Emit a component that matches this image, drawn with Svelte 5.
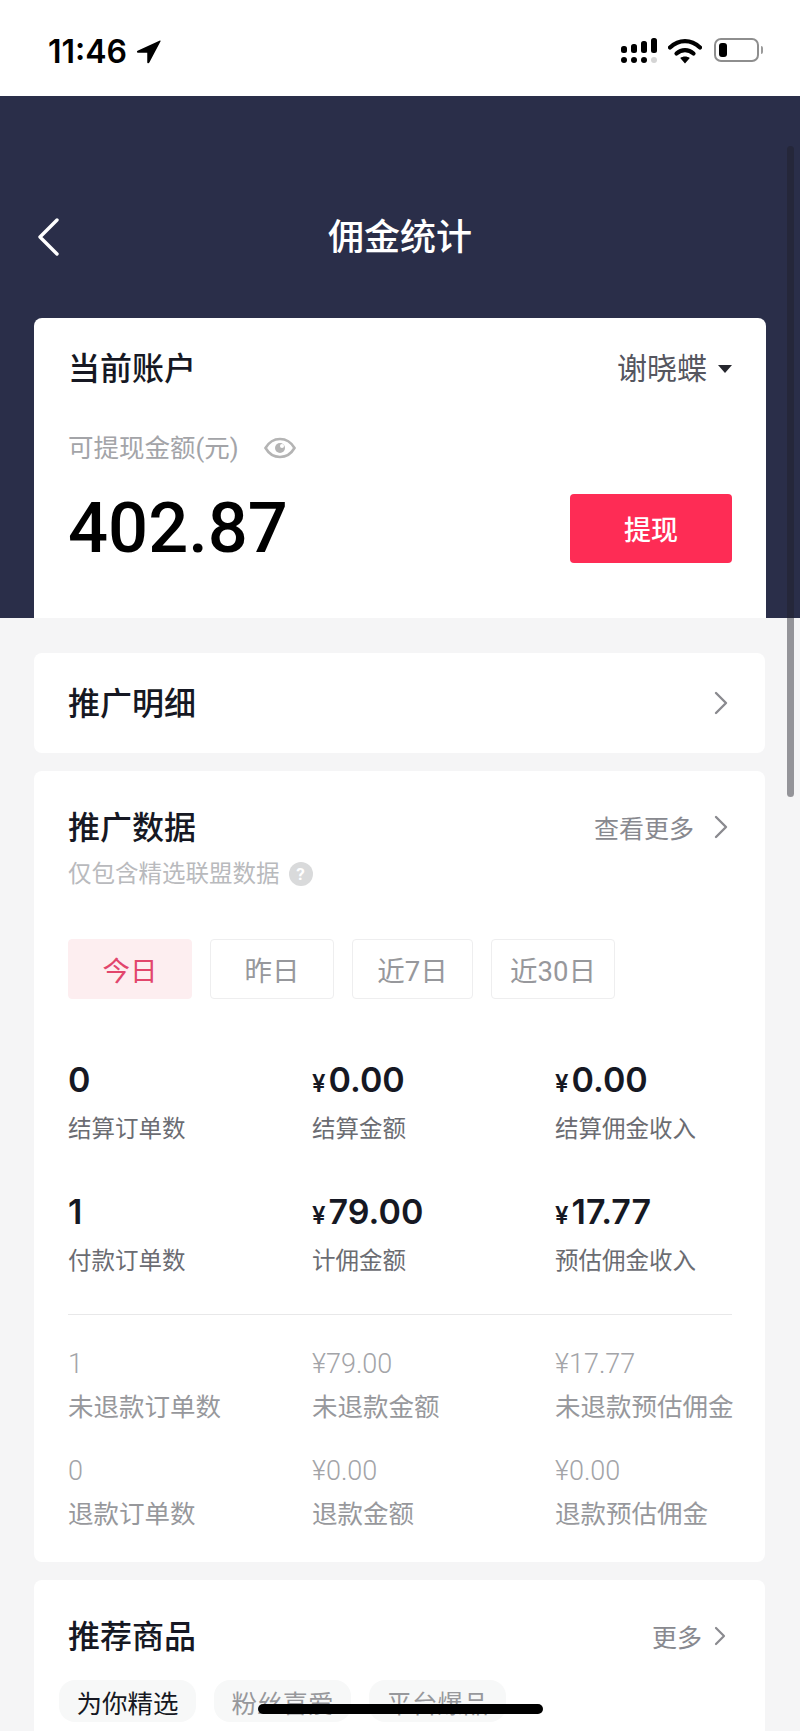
<script>
	const tabs = ['今日', '昨日', '近7日', '近30日'];

	const mainStats = [
		{ value: '0', label: '结算订单数' },
		{ value: '0.00', cur: true, label: '结算金额' },
		{ value: '0.00', cur: true, label: '结算佣金收入' },
		{ value: '1', label: '付款订单数' },
		{ value: '79.00', cur: true, label: '计佣金额' },
		{ value: '17.77', cur: true, label: '预估佣金收入' }
	];

	const subStats = [
		{ value: '1', label: '未退款订单数' },
		{ value: '¥79.00', label: '未退款金额' },
		{ value: '¥17.77', label: '未退款预估佣金' },
		{ value: '0', label: '退款订单数' },
		{ value: '¥0.00', label: '退款金额' },
		{ value: '¥0.00', label: '退款预估佣金' }
	];

	const chips = ['为你精选', '粉丝喜爱', '平台爆品'];
</script>

<div class="page">
	<header class="status">
		<div class="time">
			<span>11:46</span>
			<svg class="arrow" viewBox="0 0 24 24" width="25" height="25">
				<path d="M23 1.500 1.500 11.200c-1 .5-.7 2 .4 2H10.800v9c0 1.200 1.500 1.400 2 .4L23.600 2.200c.2-.5-.2-.9-.6-.7z" fill="#000" />
			</svg>
		</div>
		<div class="indicators">
			<svg viewBox="0 0 36 26" width="36" height="26">
				<g fill="#000">
					<rect x="0" y="8" width="6" height="7" rx="2.500" />
					<rect x="10" y="6" width="6" height="9" rx="2.500" />
					<rect x="20" y="3" width="6" height="12" rx="2.500" />
					<rect x="30" y="0" width="6" height="15" rx="2.500" />
					<circle cx="3" cy="22" r="3" />
					<circle cx="13" cy="22" r="3" />
					<circle cx="23" cy="22" r="3" />
				</g>
				<circle cx="33" cy="22" r="3" fill="#d4d4d4" />
			</svg>
			<svg viewBox="0 0 34 26" width="34" height="26">
				<path d="M2 9.500C11 1 23 1 32 9.500" fill="none" stroke="#000" stroke-width="4.200" stroke-linecap="round" />
				<path d="M8.500 15.500c5-4.600 12-4.600 17 0" fill="none" stroke="#000" stroke-width="4.200" stroke-linecap="round" />
				<path d="M12.200 20 17 25.500 21.800 20c-2.800-2-6.800-2-9.600 0z" fill="#000" />
			</svg>
			<div class="battery"><i></i></div>
		</div>
	</header>

	<section class="hero">
		<div class="nav">
			<svg class="back" viewBox="0 0 22 38" width="22" height="38">
				<path d="M20 2 3 19l17 17" fill="none" stroke="#fff" stroke-width="3.400" stroke-linecap="round" stroke-linejoin="round" />
			</svg>
			<h1>佣金统计</h1>
		</div>
		<div class="account">
			<div class="row">
				<h2>当前账户</h2>
				<div class="user">谢晓蝶<span class="caret"></span></div>
			</div>
			<div class="balance-label">
				可提现金额(元)
				<svg viewBox="0 0 32 22" width="32" height="22">
					<path d="M1.500 11C5 5 10 2 16 2s11 3 14.500 9C27 17 22 20 16 20S5 17 1.500 11z" fill="none" stroke="#b4b4b4" stroke-width="2.600" />
					<circle cx="16" cy="11" r="5" fill="#b4b4b4" />
					<circle cx="18" cy="9" r="2" fill="#fff" />
				</svg>
			</div>
			<div class="row amount-row">
				<div class="amount">402.87</div>
				<button class="withdraw">提现</button>
			</div>
		</div>
	</section>

	<main class="content">
		<section class="card detail">
			<h2>推广明细</h2>
			<svg class="chev" viewBox="0 0 14 24" width="14" height="24">
				<path d="M2 2l10 10L2 22" fill="none" stroke="#8a8a8f" stroke-width="2.400" stroke-linecap="round" stroke-linejoin="round" />
			</svg>
		</section>

		<section class="card data">
			<div class="row">
				<h2>推广数据</h2>
				<div class="more">
					查看更多
					<svg class="chev" viewBox="0 0 14 24" width="14" height="24">
						<path d="M2 2l10 10L2 22" fill="none" stroke="#8a8a8f" stroke-width="2.400" stroke-linecap="round" stroke-linejoin="round" />
					</svg>
				</div>
			</div>
			<div class="hint">仅包含精选联盟数据<span class="help">?</span></div>

			<div class="tabs">
				{#each tabs as tab, i}
					<div class="tab" class:active={i === 0}>{tab}</div>
				{/each}
			</div>

			<div class="grid main-grid">
				{#each mainStats as s}
					<div class="stat">
						<div class="value">
							{#if s.cur}<span class="cur">¥</span>{/if}{s.value}
						</div>
						<div class="label">{s.label}</div>
					</div>
				{/each}
			</div>

			<div class="divider"></div>

			<div class="grid sub-grid">
				{#each subStats as s}
					<div class="sub">
						<div class="sub-value">{s.value}</div>
						<div class="sub-label">{s.label}</div>
					</div>
				{/each}
			</div>
		</section>

		<section class="card rec">
			<div class="row">
				<h2>推荐商品</h2>
				<div class="more small">
					更多
					<svg class="chev" viewBox="0 0 12 20" width="12" height="20">
						<path d="M2 2l8 8-8 8" fill="none" stroke="#8a8a8f" stroke-width="2.200" stroke-linecap="round" stroke-linejoin="round" />
					</svg>
				</div>
			</div>
			<div class="chips">
				{#each chips as chip, i}
					<div class="chip" class:on={i === 0}>{chip}</div>
				{/each}
			</div>
		</section>
	</main>

	<div class="scrollbar"></div>
	<div class="home"></div>
</div>

<style>
	:global(body) {
		margin: 0;
		background: #f5f5f6;
	}

	.page {
		position: relative;
		width: 800px;
		height: 1731px;
		overflow: hidden;
		background: #f5f5f6;
		color: #161823;
		font-family: Roboto, "Noto Sans CJK SC", sans-serif;
	}

	.status {
		height: 96px;
		background: #fff;
		display: flex;
		justify-content: space-between;
		align-items: flex-start;
		padding: 38px 41px 0 48px;
		box-sizing: border-box;
	}

	.time {
		display: flex;
		align-items: center;
		gap: 9px;
		height: 26px;
		font-family: Inter, sans-serif;
		font-size: 32px;
		font-weight: 600;
		color: #000;
	}

	.indicators {
		display: flex;
		align-items: flex-start;
		gap: 11px;
	}

	.battery {
		position: relative;
		width: 45px;
		height: 24px;
		margin-left: 1px;
		box-sizing: border-box;
		border: 2px solid #8e8e8e;
		border-radius: 7px;
		padding: 3px;
	}

	.battery i {
		display: block;
		width: 8px;
		height: 14px;
		background: #000;
		border-radius: 3px;
	}

	.battery::after {
		content: '';
		position: absolute;
		right: -6px;
		top: 6px;
		width: 2px;
		height: 8px;
		background: #9a9a9a;
		border-radius: 0 2px 2px 0;
	}

	.hero {
		height: 522px;
		box-sizing: border-box;
		background: #2a2e49;
		padding: 0 34px;
		display: flex;
		flex-direction: column;
	}

	.nav {
		position: relative;
		height: 222px;
		padding-top: 118px;
		box-sizing: border-box;
		text-align: center;
	}

	.back {
		position: absolute;
		left: 3px;
		top: 122px;
	}

	h1 {
		margin: 0;
		font-size: 36px;
		line-height: 48px;
		font-weight: 500;
		color: #fff;
	}

	.account {
		flex: 1;
		background: #fff;
		border-radius: 8px 8px 0 0;
		padding: 30px 34px 0 34px;
	}

	.row {
		display: flex;
		justify-content: space-between;
		align-items: center;
	}

	h2 {
		margin: 0;
		font-size: 32px;
		line-height: 42px;
		font-weight: 500;
		color: #161823;
	}

	.user {
		display: flex;
		align-items: center;
		font-size: 30px;
		line-height: 42px;
		color: #55565f;
	}

	.caret {
		width: 0;
		height: 0;
		margin-left: 11px;
		border-left: 7px solid transparent;
		border-right: 7px solid transparent;
		border-top: 8px solid #26272e;
	}

	.balance-label {
		display: flex;
		align-items: center;
		gap: 25px;
		margin-top: 41px;
		font-size: 25.500px;
		line-height: 34px;
		color: #a3a4a8;
	}

	.amount-row {
		margin-top: 23px;
	}

	.amount {
		font-size: 70.500px;
		line-height: 80px;
		font-weight: 500;
		color: #000;
	}

	.withdraw {
		width: 162px;
		height: 69px;
		border: 0;
		border-radius: 4px;
		background: #fe2c55;
		color: #fff;
		font-family: inherit;
		font-size: 27px;
		font-weight: 500;
		padding: 0;
	}

	.content {
		padding: 35px 35px 0 34px;
		display: flex;
		flex-direction: column;
		gap: 18px;
	}

	.card {
		background: #fff;
		border-radius: 8px;
		padding: 0 34px;
	}

	.detail {
		height: 100px;
		box-sizing: border-box;
		padding-top: 2px;
		display: flex;
		align-items: center;
		justify-content: space-between;
	}

	.detail .chev {
		margin-right: 3px;
		margin-bottom: 2px;
	}

	.data {
		padding-top: 36px;
		height: 791px;
		box-sizing: border-box;
	}

	.more {
		display: flex;
		align-items: center;
		gap: 20px;
		margin-right: 3px;
		padding-bottom: 3px;
		font-size: 25px;
		color: #88898f;
	}

	.more.small {
		gap: 12px;
		margin-right: 5px;
	}

	.hint {
		display: flex;
		align-items: center;
		gap: 9px;
		margin-top: 10px;
		font-size: 23.500px;
		line-height: 30px;
		color: #b9babd;
	}

	.help {
		width: 24px;
		height: 24px;
		border-radius: 50%;
		background: #d9dadb;
		color: #fff;
		font-size: 17px;
		font-weight: 700;
		line-height: 24px;
		text-align: center;
	}

	.tabs {
		display: flex;
		gap: 18px;
		margin-top: 50px;
	}

	.tab {
		width: 124px;
		height: 60px;
		box-sizing: border-box;
		border: 1px solid #eeeeef;
		border-radius: 4px;
		display: flex;
		align-items: center;
		justify-content: center;
		font-size: 27.500px;
		color: #97989c;
	}

	.tab:nth-child(3) {
		width: 121px;
	}

	.tab.active {
		background: #fdeef0;
		border-color: #fdeef0;
		color: #e2466c;
	}

	.grid {
		display: grid;
		grid-template-columns: 244px 243px 243px;
	}

	.main-grid {
		margin-top: 56px;
		row-gap: 42px;
	}

	.value {
		height: 50px;
		font-family: Inter, sans-serif;
		font-size: 34px;
		line-height: 50px;
		font-weight: 600;
		color: #161823;
	}

	.cur {
		font-size: 24px;
		margin-right: 3px;
	}

	.label {
		margin-top: 8px;
		font-size: 23.500px;
		line-height: 32px;
		color: #6b6c72;
	}

	.divider {
		height: 1px;
		margin-top: 37px;
		background: #e8e8e9;
		width: 664px;
	}

	.sub-grid {
		margin-top: 33px;
		row-gap: 31px;
	}

	.sub {
		white-space: nowrap;
	}

	.sub-value {
		font-size: 27px;
		line-height: 32px;
		font-weight: 300;
		color: #a3a4a8;
	}

	.sub-label {
		margin-top: 10px;
		font-size: 25.500px;
		line-height: 34px;
		color: #97989c;
	}

	.rec {
		padding-top: 36px;
		height: 200px;
		box-sizing: content-box;
	}

	.chips {
		display: flex;
		gap: 18px;
		margin-top: 22px;
		margin-left: -9px;
	}

	.chip {
		height: 42px;
		width: 137px;
		border-radius: 16px;
		background: #f7f8f8;
		display: flex;
		align-items: center;
		justify-content: center;
		font-size: 25.500px;
		color: #97989c;
	}

	.chip.on {
		color: #161823;
	}

	.scrollbar {
		position: absolute;
		left: 787px;
		top: 146px;
		width: 7px;
		height: 651px;
		border-radius: 4px;
		background: rgba(30, 30, 40, 0.45);
	}

	.home {
		position: absolute;
		left: 258px;
		top: 1704px;
		width: 285px;
		height: 10px;
		border-radius: 5px;
		background: #000;
	}
</style>
